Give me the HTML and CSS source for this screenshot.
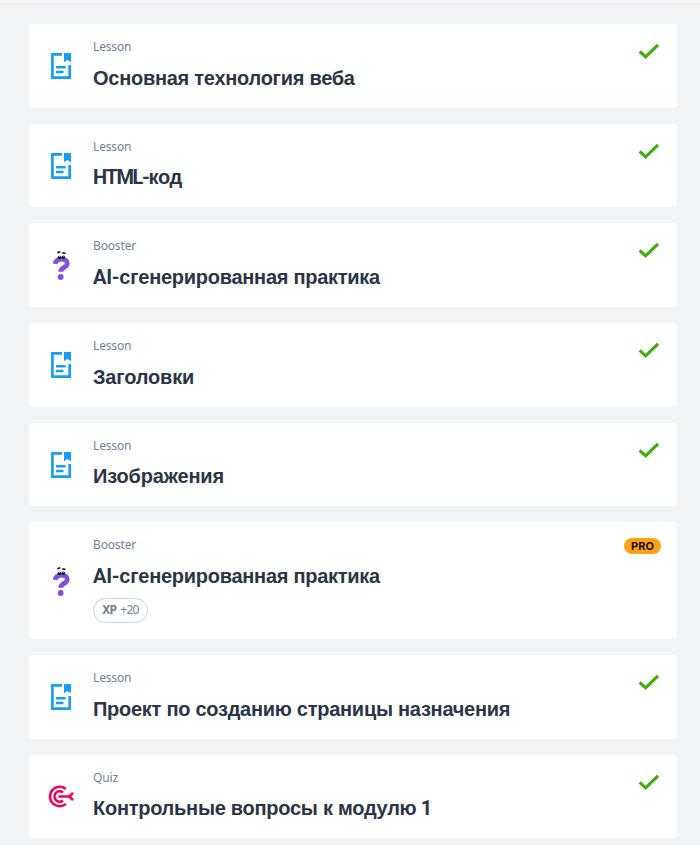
FILE: index.html
```html
<!DOCTYPE html>
<html lang="ru">
<head>
<meta charset="utf-8">
<title>Модуль 1</title>
<link rel="stylesheet" href="styles.css">
</head>
<body>
<svg class="sprite" aria-hidden="true">
  <symbol id="lesson" viewBox="0 0 26 30">
    <path d="M14 3.300H4.400v23.400h17.300V14" fill="none" stroke="#179df2" stroke-width="2.700"/>
    <path d="M16 2h7v9.200l-3.500-2.300-3.500 2.300z" fill="#179df2"/>
    <path d="M8 16.200h9.700M8 21.100h7.500" fill="none" stroke="#179df2" stroke-width="2.500"/>
  </symbol>
  <symbol id="booster" viewBox="0 0 26 30">
    <path d="M7.200 13.800c.6-3.400 3.300-4.700 6.300-4.700 3.400 0 5.800 1.600 5.800 4.300 0 4.300-6.600 3.700-6.600 8.300" fill="none" stroke="#824fdc" stroke-width="4.800"/>
    <circle cx="12.700" cy="27" r="2.900" fill="#824fdc"/>
    <path d="M9.300 2.700l3-1M14.300 2.700l3.200.7" stroke="#0a0a23" stroke-width="1.500"/>
    <circle cx="11.400" cy="7.400" r="1.700" fill="#0a0a23"/>
    <circle cx="15.300" cy="7.200" r="1.700" fill="#0a0a23"/>
    <path d="M10.900 6.300h1M14.800 6.100h1" stroke="#fff" stroke-width="1"/>
  </symbol>
  <symbol id="quiz" viewBox="0 0 26 30">
    <g fill="none" stroke="#f50057" stroke-width="2.600">
      <path d="M17.900 7.900A9.800 9.800 0 1 0 17.900 23.100"/>
      <path d="M15 11.400A5.200 5.200 0 1 0 15 19.600"/>
      <path d="M10.500 15.500H22M25 11.800L21.300 15.500 25 19.200"/>
    </g>
  </symbol>
  <symbol id="check" viewBox="0 0 22 18">
    <path d="M1.700 9.300l5.900 5.600L20 2.800" fill="none" stroke="#3fae0b" stroke-width="3.200"/>
  </symbol>
</svg>
<main class="list">
  <article class="card">
    <svg class="icon"><use href="#lesson"/></svg>
    <div class="body"><p class="kind">Lesson</p><h2 class="title">Основная технология веба</h2></div>
    <svg class="check"><use href="#check"/></svg>
  </article>
  <article class="card">
    <svg class="icon"><use href="#lesson"/></svg>
    <div class="body"><p class="kind">Lesson</p><h2 class="title"><span class="latin html">HTML-</span>код</h2></div>
    <svg class="check"><use href="#check"/></svg>
  </article>
  <article class="card">
    <svg class="icon"><use href="#booster"/></svg>
    <div class="body"><p class="kind">Booster</p><h2 class="title"><span class="latin">AI-</span>сгенерированная практика</h2></div>
    <svg class="check"><use href="#check"/></svg>
  </article>
  <article class="card">
    <svg class="icon"><use href="#lesson"/></svg>
    <div class="body"><p class="kind">Lesson</p><h2 class="title short">Заголовки</h2></div>
    <svg class="check"><use href="#check"/></svg>
  </article>
  <article class="card">
    <svg class="icon"><use href="#lesson"/></svg>
    <div class="body"><p class="kind">Lesson</p><h2 class="title short">Изображения</h2></div>
    <svg class="check"><use href="#check"/></svg>
  </article>
  <article class="card card-pro">
    <svg class="icon"><use href="#booster"/></svg>
    <div class="body"><p class="kind">Booster</p><h2 class="title"><span class="latin">AI-</span>сгенерированная практика</h2>
      <span class="xp"><b>XP</b><span>+20</span></span></div>
    <span class="pro">PRO</span>
  </article>
  <article class="card">
    <svg class="icon"><use href="#lesson"/></svg>
    <div class="body"><p class="kind">Lesson</p><h2 class="title">Проект по созданию страницы назначения</h2></div>
    <svg class="check"><use href="#check"/></svg>
  </article>
  <article class="card">
    <svg class="icon"><use href="#quiz"/></svg>
    <div class="body"><p class="kind">Quiz</p><h2 class="title">Контрольные вопросы к модулю <span class="latin digit">1</span></h2></div>
    <svg class="check"><use href="#check"/></svg>
  </article>
</main>
</body>
</html>
```
FILE: styles.css
```css
* {
  box-sizing: border-box;
}

body {
  margin: 0;
  height: 845px;
  overflow: hidden;
  background: #f0f4f7;
  border-top: 3px solid #f9f9f9;
  font-family: "Noto Sans", "Liberation Sans", sans-serif;
}

.sprite {
  display: none;
}

.list {
  display: flex;
  flex-direction: column;
  gap: 16px;
  padding: 21px 23px 0 29px;
}

.card {
  display: flex;
  flex: none;
  height: 83.68px;
  padding: 0 16px 0 19px;
  background: #fff;
  border-radius: 4px;
}

.card-pro {
  height: 116.6px;
}

.icon {
  flex: none;
  align-self: center;
  width: 26px;
  height: 30px;
}

.body {
  flex: 1;
  margin-left: 19px;
  padding-top: 13px;
}

.kind {
  margin: 0;
  font-size: 12px;
  line-height: 20px;
  letter-spacing: -0.15px;
  color: #6c8299;
}

.title {
  margin: 6.6px 0 0;
  font: bold 20px/28px "Liberation Sans", sans-serif;
  letter-spacing: -0.27px;
  color: #2a3646;
  white-space: nowrap;
}

.short {
  letter-spacing: -0.17px;
}

.latin {
  font-family: Roboto, sans-serif;
  font-weight: 700;
  font-size: 20px;
  line-height: 20px;
}

.html {
  letter-spacing: -1.4px;
}

.digit {
  margin-left: -1px;
}

.xp {
  display: flex;
  align-items: center;
  justify-content: center;
  gap: 4px;
  width: 55px;
  height: 25px;
  margin-top: 7.9px;
  padding-bottom: 2px;
  border: 1px solid #c5d2de;
  border-radius: 13px;
  font-size: 12px;
  letter-spacing: -0.7px;
  color: #6c8299;
}

.check {
  flex: none;
  width: 22px;
  height: 18px;
  margin: 18px 1px 0 0;
}

.pro {
  flex: none;
  width: 37px;
  height: 16px;
  margin-top: 16px;
  border-radius: 8px;
  background: #ffa116;
  font: bold 11px/16px Inter, sans-serif;
  text-align: center;
  color: #111;
}
```
